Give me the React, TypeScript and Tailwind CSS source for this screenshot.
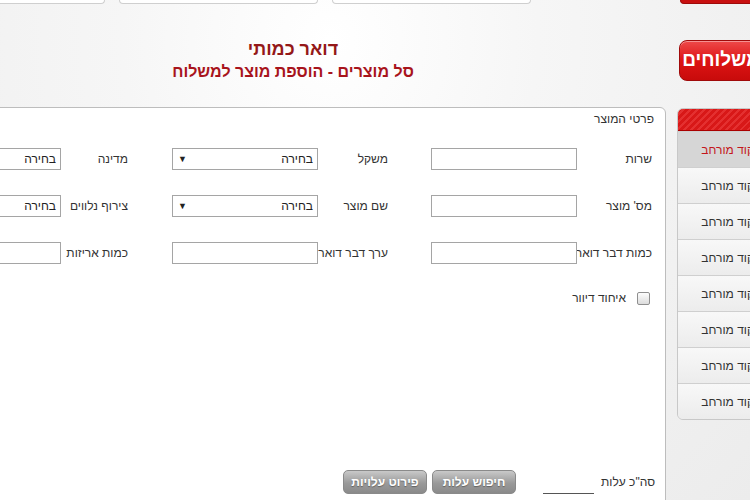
import React from "react";

const Label = ({ text, w, mr }: { text: string; w: string; mr?: string }) => (
  <div className={`${w} ${mr ?? ""} shrink-0 whitespace-nowrap text-right text-[12px] leading-[22px] text-[#333]`}>{text}</div>
);

const Input = ({ w = "w-[146px]" }: { w?: string }) => (
  <div className={`${w} h-[22px] shrink-0 border border-[#a5a5a5] bg-white`} />
);

const Select = ({ w = "w-[146px]", arrow = true }: { w?: string; arrow?: boolean }) => (
  <div className={`${w} h-[22px] shrink-0 border border-[#a5a5a5] bg-white flex items-center justify-between pr-[4px] pl-[5px] text-[12px] text-[#222]`}>
    <span>בחירה</span>
    {arrow && <span className="text-[9px] leading-none">▼</span>}
  </div>
);

const SideItem = ({ active }: { active?: boolean }) => (
  <div
    className={`h-[36px] border-t border-[#cfcfcf] flex items-center justify-start pr-[25px] whitespace-nowrap text-[12px] ${
      active ? "bg-[#d6d6d6] text-[#c4161c]" : "bg-[linear-gradient(#f8f8f8,#ececec)] text-[#333]"
    }`}
  >
    קוד מורחב
  </div>
);

export default function App() {
  return (
    <div
      className="w-[750px] h-[500px] overflow-hidden bg-[radial-gradient(ellipse_at_44%_8%,#ffffff_0%,#f6f6f6_35%,#ececec_100%)]"
      style={{ fontFamily: '"Liberation Sans", Arial, sans-serif' }}
    >
      {/* top strip */}
      <div className="h-[4px] flex" dir="ltr">
        <div className="ml-[-20px] w-[125px] h-[4px] border border-t-0 border-[#cfcfcf] bg-white rounded-b-[4px] shrink-0" />
        <div className="ml-[14px] w-[199px] h-[4px] border border-t-0 border-[#cfcfcf] bg-white rounded-b-[4px] shrink-0" />
        <div className="ml-[14px] w-[199px] h-[4px] border border-t-0 border-[#cfcfcf] bg-white rounded-b-[4px] shrink-0" />
        <div className="ml-[149px] w-[100px] h-[4px] bg-[#c81010] border border-t-0 border-[#9e0a0a] rounded-bl-[8px] shrink-0" />
      </div>

      <div className="flex" dir="rtl">
        {/* right column */}
        <div className="w-[103px] mr-[-30px] shrink-0 flex flex-col">
          <div className="mt-[36px] ml-[2px] h-[41px] rounded-[8px] border border-[#a00a0a] bg-[linear-gradient(#ee4a4a_0%,#dd1414_50%,#c80b0b_100%)] shadow-[inset_0_1px_0_rgba(255,255,255,0.4)] flex items-center pr-[19px] whitespace-nowrap text-white font-bold text-[19px]">
            משלוחים
          </div>
          <div className="mt-[27px] border border-[#c8c8c8] rounded-tl-[6px] rounded-bl-[6px] overflow-hidden">
            <div className="h-[22px] bg-[repeating-linear-gradient(135deg,#d81818_0px,#d81818_3px,#e43030_3px,#e43030_5px)] border-b border-[#a00]" />
            <SideItem active />
            <SideItem />
            <SideItem />
            <SideItem />
            <SideItem />
            <SideItem />
            <SideItem />
            <SideItem />
          </div>
        </div>

        {/* main column */}
        <div className="w-[746px] mr-[11px] shrink-0 flex flex-col">
          <div className="pt-[34px] text-center">
            <div className="text-[18px] leading-[22px] font-bold text-[#941818]">דואר כמותי</div>
            <div className="mt-[2px] text-[16px] leading-[20px] font-bold text-[#a8141c]">סל מוצרים - הוספת מוצר למשלוח</div>
          </div>

          <div className="mt-[25px] h-[420px] bg-white border border-[#bdbdbd] rounded-tr-[6px]">
            <div className="pt-[4px] pr-[11px] text-[12px] leading-[14px] text-[#333]">פרטי המוצר</div>

            <div className="mt-[22px] flex flex-col gap-[25px] pr-[13px]">
              <div className="flex items-center">
                <Label text="שרות" w="w-[75px]" />
                <Input />
                <Label text="משקל" w="w-[70px]" mr="mr-[43px]" />
                <Select />
                <Label text="מדינה" w="w-[67px]" mr="mr-[44px]" />
                <Select arrow={false} />
              </div>
              <div className="flex items-center">
                <Label text="מס' מוצר" w="w-[75px]" />
                <Input />
                <Label text="שם מוצר" w="w-[70px]" mr="mr-[43px]" />
                <Select />
                <Label text="צירוף נלווים" w="w-[67px]" mr="mr-[44px]" />
                <Select arrow={false} />
              </div>
              <div className="flex items-center">
                <Label text="כמות דבר דואר" w="w-[75px]" />
                <Input />
                <Label text="ערך דבר דואר" w="w-[70px]" mr="mr-[43px]" />
                <Input />
                <Label text="כמות אריזות" w="w-[67px]" mr="mr-[44px]" />
                <Input />
              </div>
            </div>

            <div className="mt-[27px] pr-[15px] flex items-center gap-[11px]">
              <div className="w-[13px] h-[13px] rounded-[2px] border border-[#8f8f8f] bg-[linear-gradient(#fdfdfd,#dcdcdc)]" />
              <span className="text-[12px] leading-[14px] text-[#333]">איחוד דיוור</span>
            </div>

            <div className="mt-[165px] pr-[10px] flex items-center">
              <span className="text-[12px] leading-[24px] text-[#333] whitespace-nowrap">סה"כ עלות</span>
              <div className="mr-[7px] w-[51px] h-[24px] border-b border-[#555]" />
              <button className="mr-[27px] w-[84px] h-[24px] rounded-[5px] border border-[#8a8a8a] bg-[linear-gradient(#c9c9c9,#9a9a9a_55%,#8a8a8a)] text-white font-bold text-[12px] [text-shadow:0_1px_1px_rgba(0,0,0,0.35)]">
                חיפוש עלות
              </button>
              <button className="mr-[5px] w-[84px] h-[24px] rounded-[5px] border border-[#8a8a8a] bg-[linear-gradient(#c9c9c9,#9a9a9a_55%,#8a8a8a)] text-white font-bold text-[12px] [text-shadow:0_1px_1px_rgba(0,0,0,0.35)]">
                פירוט עלויות
              </button>
            </div>
          </div>
        </div>
      </div>
    </div>
  );
}
